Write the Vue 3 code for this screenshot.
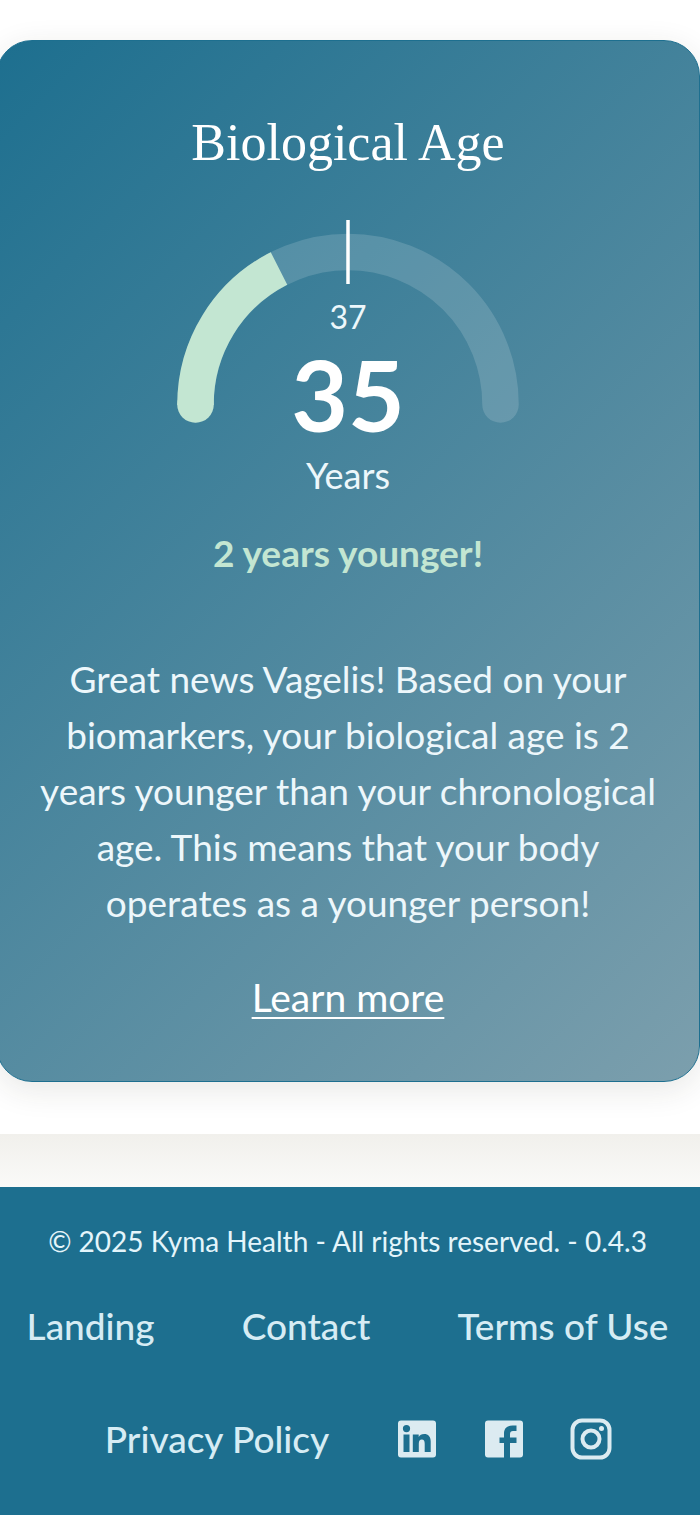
<script setup>
const chronologicalAge = 37
const biologicalAge = 35
const links = ['Landing', 'Contact', 'Terms of Use']
</script>

<template>
  <div class="page">
    <main class="content">
      <section class="card">
        <h1 class="title">Biological Age</h1>
        <div class="gauge">
          <svg class="dial" viewBox="0 0 342 204" aria-hidden="true">
            <path class="track" d="M18.5 185.5a152.5 152.5 0 0 1 305 0" />
            <circle class="cap" cx="18.5" cy="185.5" r="18.25" />
            <path class="progress" d="M18.5 186v-.5A152.5 152.5 0 0 1 102 49.5" />
            <path class="tick" d="M171 1v64" />
          </svg>
          <div class="readout">
            <span class="reference">{{ chronologicalAge }}</span>
            <strong class="age">{{ biologicalAge }}</strong>
            <span class="unit">Years</span>
          </div>
        </div>
        <p class="result">2 years younger!</p>
        <p class="message">
          Great news Vagelis! Based on your biomarkers, your biological age is 2
          years younger than your chronological age. This means that your body
          operates as a younger person!
        </p>
        <a class="more" href="#">Learn more</a>
      </section>
    </main>
    <div class="band"></div>
    <footer class="footer">
      <p class="copyright">© 2025 Kyma Health - All rights reserved. - 0.4.3</p>
      <nav class="links">
        <a v-for="link in links" :key="link" href="#">{{ link }}</a>
      </nav>
      <div class="social">
        <a class="policy" href="#">Privacy Policy</a>
        <a class="icon" href="#" aria-label="LinkedIn">
          <svg viewBox="0 0 42 42">
            <path fill-rule="evenodd" d="M5 2.5h32a3 3 0 0 1 3 3v31a3 3 0 0 1-3 3H5a3 3 0 0 1-3-3v-31a3 3 0 0 1 3-3zM7.5 16.500v17.500H13.500v-17.500zM10.500 7a3.600 3.600 0 1 0 0 7.200 3.600 3.600 0 0 0 0-7.200zM16.800 16.500V34h6V25.500c0-2.500 1-4 3-4s2.900 1.500 2.900 4V34h6V23.600c0-5-2.500-7.500-6.500-7.500-2.700 0-4.500 1.200-5.500 2.900v-2.500z" />
          </svg>
        </a>
        <a class="icon" href="#" aria-label="Facebook">
          <svg viewBox="0 0 42 42">
            <path d="M5 2.500h32a3 3 0 0 1 3 3v31a3 3 0 0 1-3 3H27V25h6.500v-5.500H27V16c0-2 1-3 3-3h3.500V7.500H29.500c-5.500 0-8.500 3-8.500 8v4h-4.500V25H21v14.500H5a3 3 0 0 1-3-3v-31a3 3 0 0 1 3-3z" />
          </svg>
        </a>
        <a class="icon" href="#" aria-label="Instagram">
          <svg viewBox="0 0 42 42">
            <rect class="outline" x="2.500" y="2.500" width="37" height="37" rx="9.500" />
            <circle class="outline" cx="21" cy="21" r="8.500" />
            <circle cx="31.500" cy="10.500" r="2.500" />
          </svg>
        </a>
      </div>
    </footer>
  </div>
</template>

<style>
body {
  margin: 0;
  background: #1d6f8f;
}
</style>

<style scoped>
.page {
  font-family: Lato, "Noto Sans", sans-serif;
  background: #fff;
  overflow: hidden;
}

.content {
  padding: 40px 0 52px;
}

.card {
  box-sizing: border-box;
  margin-left: -4px;
  padding: 70px 40px 58px;
  display: flex;
  flex-direction: column;
  align-items: center;
  border: 1px solid #1d6f8f;
  border-radius: 36px;
  background: linear-gradient(135deg, #1d6f8f, #7c9fad) border-box;
  box-shadow: 0 8px 32px rgba(50, 45, 30, 0.11);
  color: #edf7fb;
  text-align: center;
}

.title {
  margin: 0;
  font: 400 52px/64px "Liberation Serif", serif;
  color: #fff;
}

.gauge {
  display: grid;
  justify-items: center;
  margin-top: 44px;
}

.dial,
.readout {
  grid-area: 1 / 1;
}

.dial {
  width: 342px;
  height: 204px;
  fill: none;
}

.track {
  stroke: rgba(255, 255, 255, 0.15);
  stroke-width: 36.5;
  stroke-linecap: round;
}

.progress {
  stroke: #c3e6d2;
  stroke-width: 36.5;
}

.cap {
  fill: #c3e6d2;
}

.tick {
  stroke: #fff;
  stroke-width: 3.5;
}

.readout {
  display: flex;
  flex-direction: column;
  padding-top: 78px;
}

.reference {
  font-size: 32px;
  line-height: 40px;
}

.age {
  font-size: 98px;
  line-height: 114px;
  color: #fff;
}

.unit {
  font-size: 36px;
  line-height: 48px;
}

.result {
  margin: 32px 0 0;
  font-size: 37px;
  line-height: 44px;
  font-weight: 700;
  color: #c3e6d2;
}

.message {
  margin: 76px 0 0;
  font-size: 37px;
  line-height: 56px;
}

.more {
  margin-top: 40px;
  font-size: 39px;
  line-height: 52px;
  color: #fff;
  text-decoration-thickness: 2px;
  text-underline-offset: 5px;
}

.band {
  height: 53px;
  background: linear-gradient(#f1f0ec, #fafaf8);
}

.footer {
  padding: 36px 5px 52px 0;
  background: #1d6f8f;
  color: #e4f5fb;
}

.footer a {
  color: #d6ecf4;
  text-decoration: none;
}

.copyright {
  margin: 0;
  font-size: 28px;
  line-height: 36px;
  text-align: center;
}

.links,
.social {
  display: flex;
  justify-content: center;
  align-items: center;
  font-size: 37px;
  line-height: 44px;
  font-weight: 500;
}

.links {
  gap: 87px;
  margin-top: 45px;
}

.social {
  gap: 45px;
  margin-top: 69px;
  padding-left: 22px;
}

.policy {
  margin-right: 22px;
}

.icon {
  display: flex;
}

.icon svg {
  width: 42px;
  height: 42px;
  fill: #dcebf1;
}

.icon .outline {
  fill: none;
  stroke: #dcebf1;
  stroke-width: 4;
}
</style>
